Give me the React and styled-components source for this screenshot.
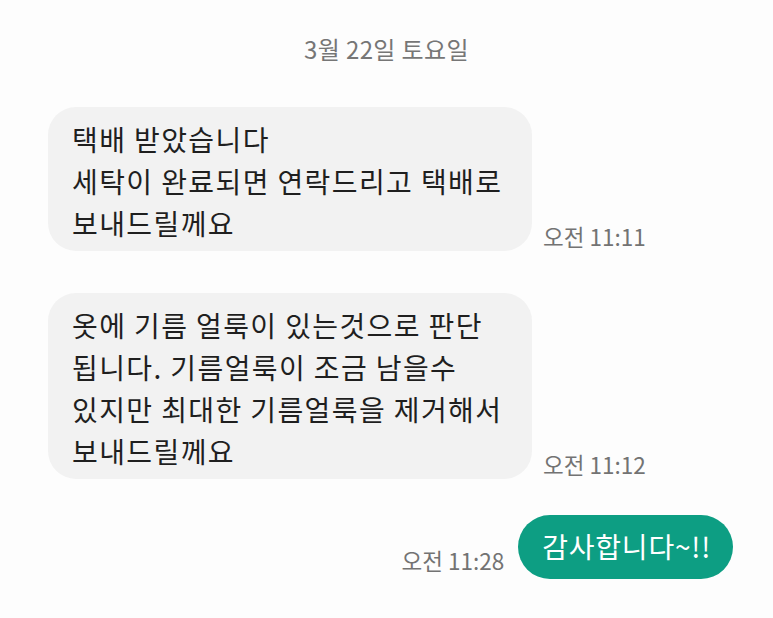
import styled, { createGlobalStyle } from 'styled-components';

const GlobalStyle = createGlobalStyle`
  html, body {
    margin: 0;
    padding: 0;
    background: #fdfdfd;
  }
  body {
    font-family: "Noto Sans CJK KR", "Noto Sans", sans-serif;
  }
`;

const Screen = styled.div`
  width: 773px;
  height: 618px;
  box-sizing: border-box;
  padding: 34px 40px 0 48px;
  display: flex;
  flex-direction: column;
  overflow: hidden;
`;

const DateLabel = styled.div`
  height: 30px;
  line-height: 30px;
  margin-bottom: 43px;
  padding-right: 8px;
  text-align: center;
  font-size: 24px;
  letter-spacing: 0.4px;
  color: #767676;
`;

const Thread = styled.div`
  display: flex;
  flex-direction: column;
`;

const Row = styled.div`
  display: flex;
  align-items: flex-end;
  justify-content: ${(props) => (props.$sent ? 'flex-end' : 'flex-start')};
  gap: ${(props) => (props.$sent ? '14px' : '11px')};
  margin-top: ${(props) => props.$space}px;
`;

const Bubble = styled.div`
  box-sizing: border-box;
  width: 484px;
  padding: 11px 22px 7px 24px;
  border-radius: 28px;
  background: #f2f2f2;
  color: #1f1f1f;
  font-size: 28px;
  letter-spacing: 1.4px;
  line-height: 42px;
  white-space: pre-line;
`;

const SentBubble = styled.div`
  height: 64px;
  padding: 0 22px 0 24px;
  border-radius: 32px;
  background: #0d9e83;
  color: #ffffff;
  font-size: 28px;
  letter-spacing: 0.8px;
  line-height: 62px;
  white-space: nowrap;
`;

const Time = styled.span`
  font-size: 22.5px;
  line-height: 28px;
  color: #737373;
  white-space: nowrap;
  margin-bottom: ${(props) => (props.$sent ? '5px' : '1px')};
`;

const messages = [
  {
    id: 1,
    text: '택배 받았습니다\n세탁이 완료되면 연락드리고 택배로\n보내드릴께요',
    time: '오전 11:11',
    space: 0,
  },
  {
    id: 2,
    text: '옷에 기름 얼룩이 있는것으로 판단\n됩니다. 기름얼룩이 조금 남을수\n있지만 최대한 기름얼룩을 제거해서\n보내드릴께요',
    time: '오전 11:12',
    space: 42,
  },
  { id: 3, text: '감사합니다~!!', time: '오전 11:28', sent: true, space: 36 },
];

export default function App() {
  return (
    <>
      <GlobalStyle />
      <Screen>
        <DateLabel>3월 22일 토요일</DateLabel>
        <Thread>
          {messages.map((m) =>
            m.sent ? (
              <Row key={m.id} $sent $space={m.space}>
                <Time $sent>{m.time}</Time>
                <SentBubble>{m.text}</SentBubble>
              </Row>
            ) : (
              <Row key={m.id} $space={m.space}>
                <Bubble>{m.text}</Bubble>
                <Time>{m.time}</Time>
              </Row>
            )
          )}
        </Thread>
      </Screen>
    </>
  );
}
